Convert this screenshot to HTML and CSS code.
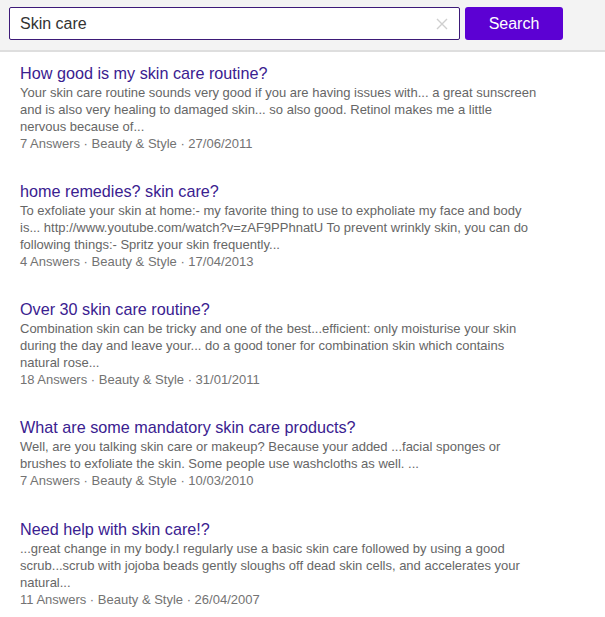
FILE: index.html
```html
<!DOCTYPE html>
<html lang="en">
<head>
<meta charset="utf-8">
<title>Skin care - Search</title>
<link rel="stylesheet" href="styles.css">
</head>
<body>
<header class="bar">
  <form class="search">
    <div class="field">
      <span class="query">Skin care</span>
      <svg class="clear" width="12" height="12" viewBox="0 0 12 12"><path d="M1 1L11 11M11 1L1 11" stroke="#cfcfcf" stroke-width="1.4" fill="none"/></svg>
    </div>
    <button class="btn" type="button">Search</button>
  </form>
</header>
<main class="results">
  <article class="item">
    <a class="title" href="#">How good is my skin care routine?</a>
    <p class="snippet">Your skin care routine sounds very good if you are having issues with... a great sunscreen<br>and is also very healing to damaged skin... so also good. Retinol makes me a little<br>nervous because of...</p>
    <p class="meta">7 Answers · Beauty &amp; Style · 27/06/2011</p>
  </article>
  <article class="item">
    <a class="title" href="#">home remedies? skin care?</a>
    <p class="snippet">To exfoliate your skin at home:- my favorite thing to use to expholiate my face and body<br>is... http://www.youtube.com/watch?v=zAF9PPhnatU To prevent wrinkly skin, you can do<br>following things:- Spritz your skin frequently...</p>
    <p class="meta">4 Answers · Beauty &amp; Style · 17/04/2013</p>
  </article>
  <article class="item">
    <a class="title" href="#">Over 30 skin care routine?</a>
    <p class="snippet">Combination skin can be tricky and one of the best...efficient: only moisturise your skin<br>during the day and leave your... do a good toner for combination skin which contains<br>natural rose...</p>
    <p class="meta">18 Answers · Beauty &amp; Style · 31/01/2011</p>
  </article>
  <article class="item">
    <a class="title" href="#">What are some mandatory skin care products?</a>
    <p class="snippet">Well, are you talking skin care or makeup? Because your added ...facial sponges or<br>brushes to exfoliate the skin. Some people use washcloths as well. ...</p>
    <p class="meta">7 Answers · Beauty &amp; Style · 10/03/2010</p>
  </article>
  <article class="item">
    <a class="title" href="#">Need help with skin care!?</a>
    <p class="snippet">...great change in my body.I regularly use a basic skin care followed by using a good<br>scrub...scrub with jojoba beads gently sloughs off dead skin cells, and accelerates your<br>natural...</p>
    <p class="meta">11 Answers · Beauty &amp; Style · 26/04/2007</p>
  </article>
</main>
</body>
</html>
```
FILE: styles.css
```css
* { box-sizing: border-box; }
html, body { margin: 0; padding: 0; background: #fff; }
body { font-family: "Liberation Sans", Arial, sans-serif; }

.bar {
  background: #f3f3f3;
  height: 52px;
  border-bottom: 2px solid #dedede;
  padding: 7px 0 0 9px;
}
.search { display: flex; gap: 5px; margin: 0; }
.field {
  width: 451px;
  height: 33px;
  background: #fff;
  border: 1px solid #3d1a78;
  border-radius: 2px;
  display: flex;
  align-items: center;
  padding: 0 11px 0 10px;
}
.query { flex: 1; font-size: 16px; color: #333; }
.clear { display: block; }
.btn {
  width: 98px;
  height: 33px;
  background: #5c01d3;
  color: #fff;
  border: 0;
  border-radius: 3px;
  font-family: inherit;
  font-size: 16px;
  padding: 0;
}

.results { padding: 11px 20px 0 20px; }
.item { margin-bottom: 29px; }
.item:nth-child(4) { margin-bottom: 30px; }
.title {
  display: block;
  color: #3a2190;
  text-decoration: none;
  font-size: 16.2px;
  line-height: 20px;
  margin-bottom: 1px;
}
.snippet, .meta {
  margin: 0;
  font-size: 13px;
  line-height: 17px;
  color: #666;
  white-space: nowrap;
}
.meta { color: #737373; }
```
